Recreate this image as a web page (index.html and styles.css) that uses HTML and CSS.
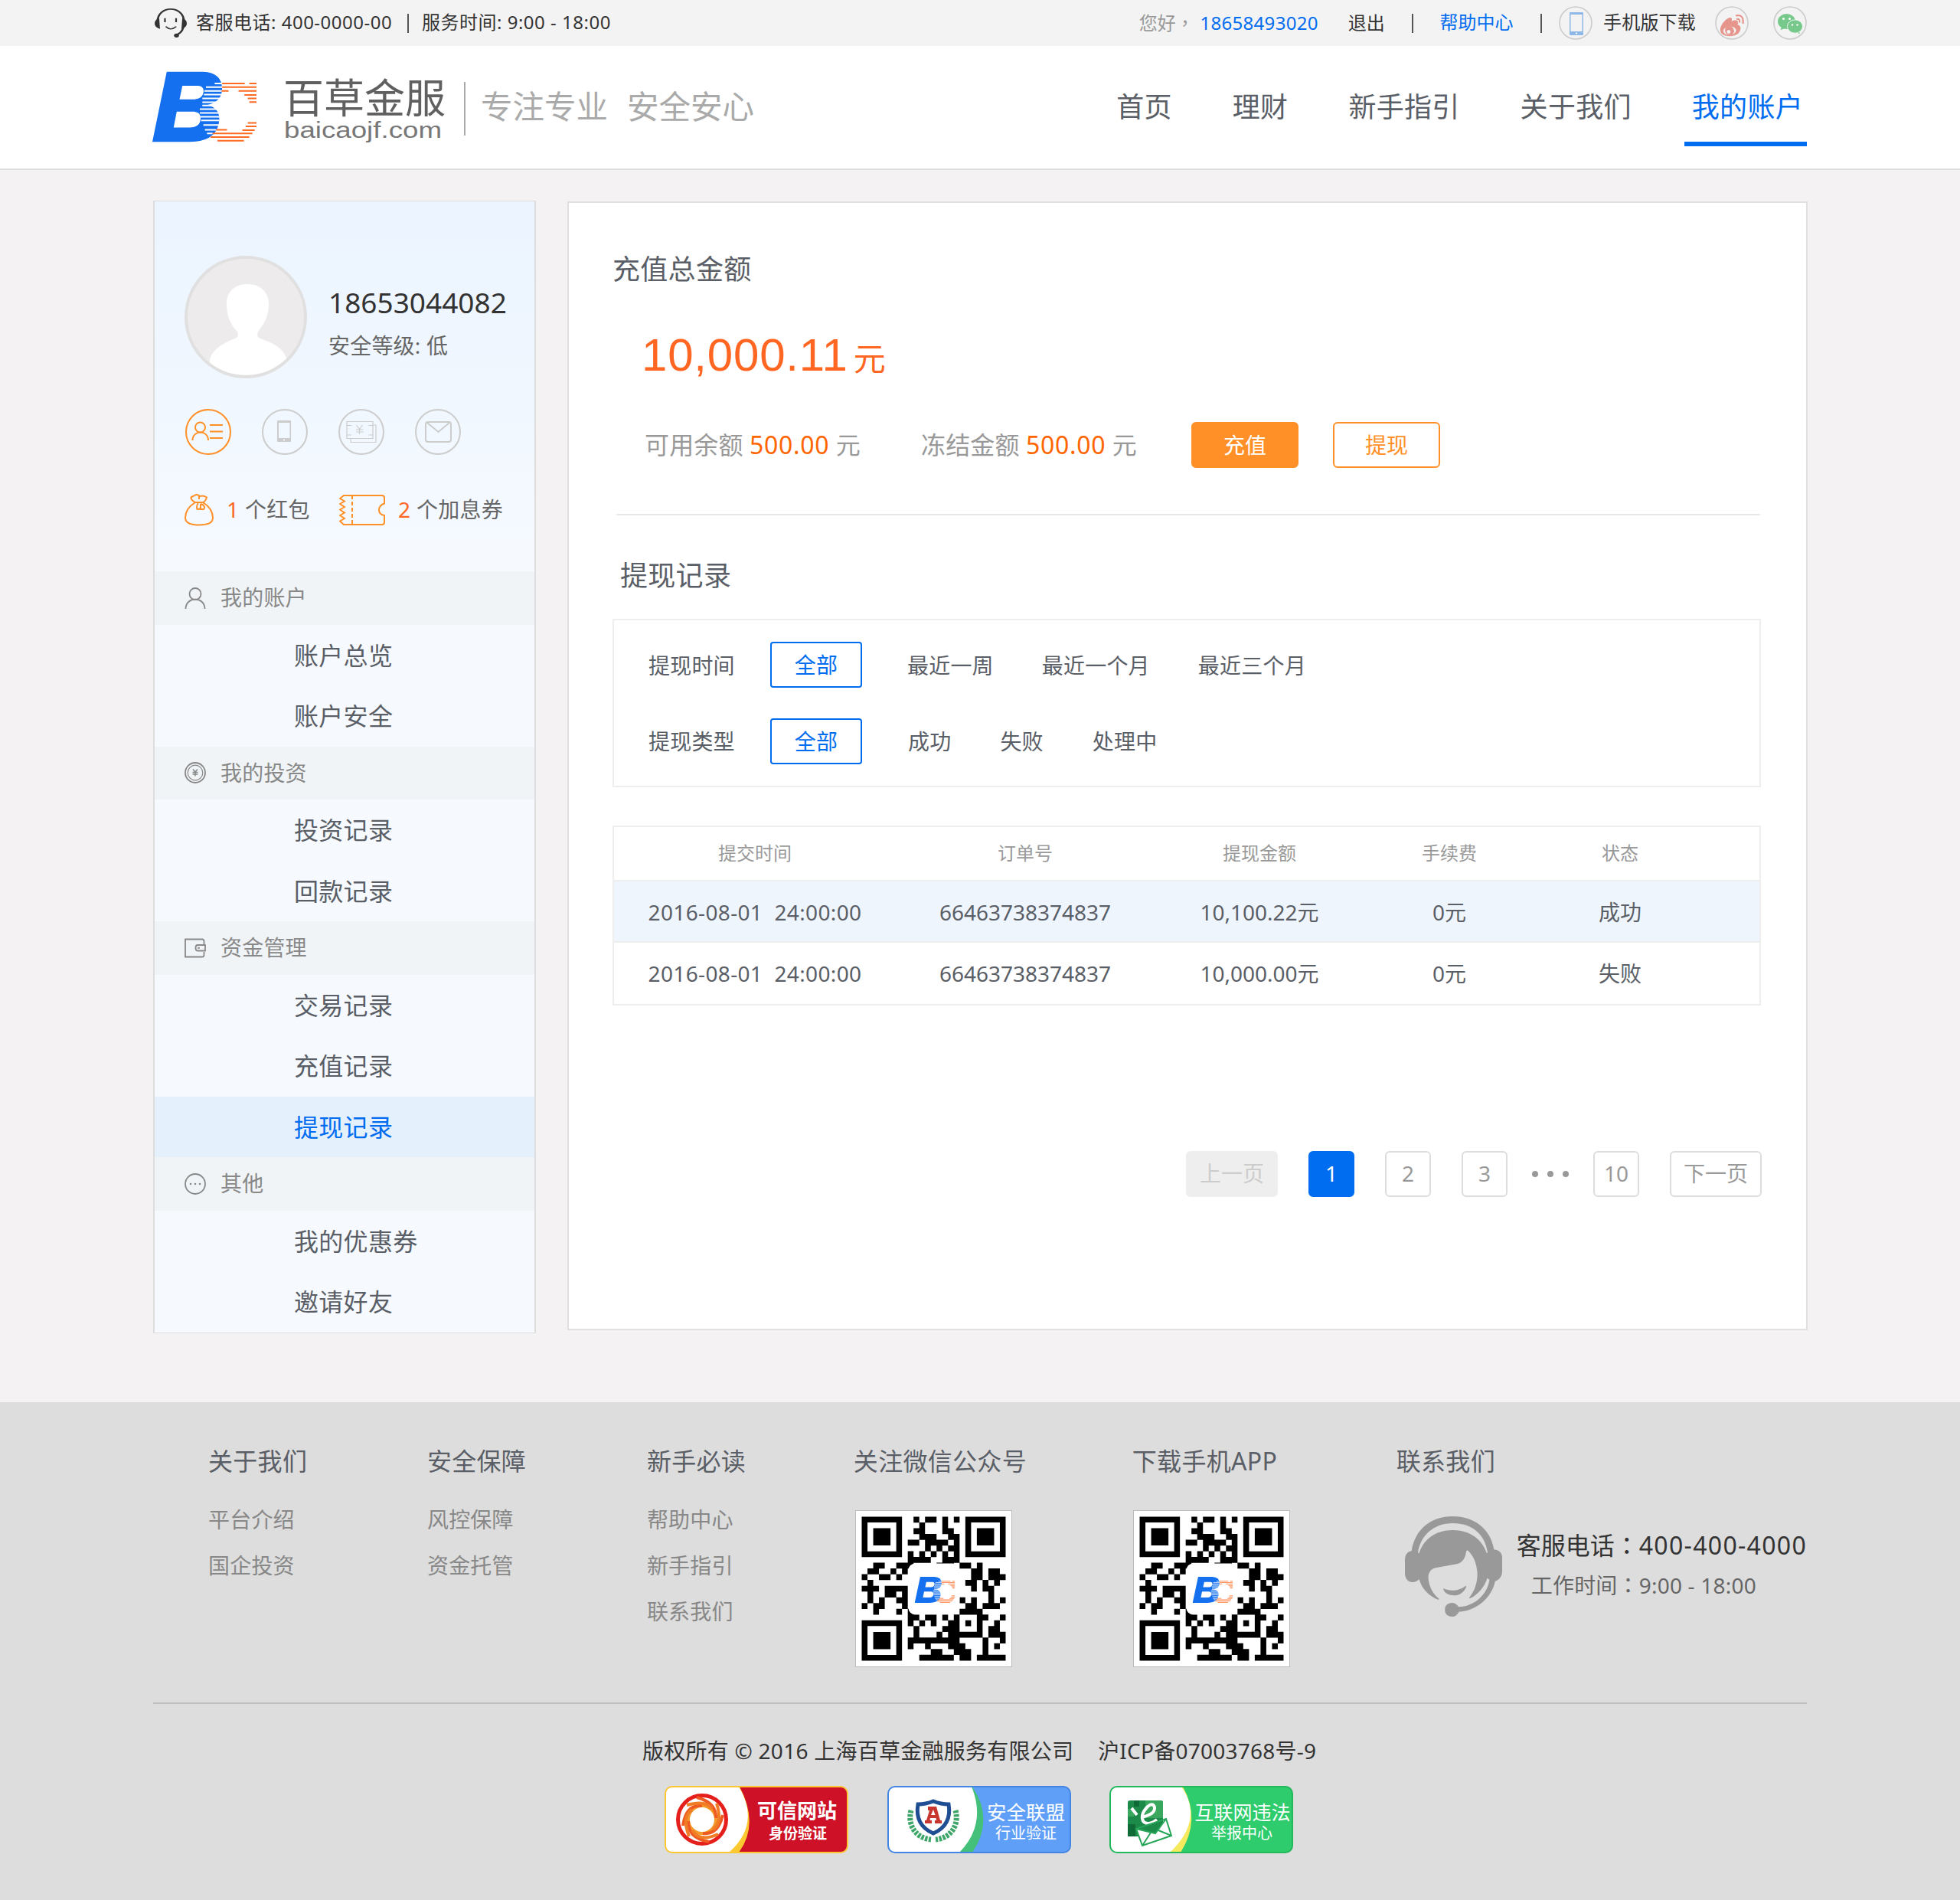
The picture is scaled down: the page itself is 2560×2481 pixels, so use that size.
FILE: index.html
```html
<!DOCTYPE html>
<html lang="zh-CN">
<head>
<meta charset="utf-8">
<title>百草金服 - 提现记录</title>
<link rel="stylesheet" href="styles.css">
</head>
<body>
<svg class="sprite" aria-hidden="true">
  <symbol id="bc-mark" viewBox="27 25 406 278" preserveAspectRatio="none">
    <path fill="#1470ee" fill-rule="evenodd" d="M83 27H225Q299 30 299 95Q297 145 240 157Q288 166 288 212Q284 300 172 301H27ZM144 82L133 135H190Q223 133 227 105Q228 83 205 82ZM122 183L110 245H175Q213 243 215 212Q217 184 190 183Z"/>
    <path stroke="#fff" stroke-width="6" d="M270 73H299M236 87H299M230 102H299M228 116H299M222 131H292M222 146H280M222 159H268M268 166H288M212 173H282M212 188H288M214 203H289M217 217H288M226 235H288M232 254H276M240 268H262"/>
    <path stroke="#ff6a22" stroke-width="6" d="M299 73H387M405 73H433M299 87H433M297 102H324M363 102H433M386 118H433M399 131H433M405 145H433M399 227H433M391 240H433M276 254H318M378 255H426M262 268H417M254 282H405M281 296H384"/>
  </symbol>
  <symbol id="qr" viewBox="-1 -1 27 27">
    <path fill="#fff" d="M-1-1H26V26H-1Z"/>
    <path fill="none" stroke="#000" d="M.5.5h6v6h-6zM18.5.5h6v6h-6zM.5 18.5h6v6h-6z"/>
    <path d="M2 2h3v3H2zM20 2h3v3h-3zM2 20h3v3H2z"/>
    <path stroke="#000" stroke-width="1.03" d="M9 .5h1M11 .5h2M14 .5h1M16 .5h1M10 1.5h1M14 1.5h1M9 2.5h2M14 2.5h2M10 3.5h3M15 3.5h2M8 4.5h2M11 4.5h4M16 4.5h1M11 5.5h1M13 5.5h1M15 5.5h2M8 6.5h1M10 6.5h1M12 6.5h1M14 6.5h1M16 6.5h1M8 7.5h4M14 7.5h3M2 8.5h2M6 8.5h3M13 8.5h3M17 8.5h2M20 8.5h1M1 9.5h2M5 9.5h1M7 9.5h1M19 9.5h2M22 9.5h2M0 10.5h1M3 10.5h2M6 10.5h1M19 10.5h2M22 10.5h3M1 11.5h1M18 11.5h2M21 11.5h1M23 11.5h1M0 12.5h3M4 12.5h4M19 12.5h1M21 12.5h2M1 13.5h1M4 13.5h2M7 13.5h1M22 13.5h1M1 14.5h1M3 14.5h1M6 14.5h2M17 14.5h1M19 14.5h1M22 14.5h1M24 14.5h1M0 15.5h1M2 15.5h2M7 15.5h1M18 15.5h2M21 15.5h3M2 16.5h1M6 16.5h1M8 16.5h1M17 16.5h4M8 17.5h2M11 17.5h2M14 17.5h1M16 17.5h1M20 17.5h2M24 17.5h1M8 18.5h1M10 18.5h1M12 18.5h1M15 18.5h2M18 18.5h1M20 18.5h1M23 18.5h1M9 19.5h1M14 19.5h3M20 19.5h1M22 19.5h2M9 20.5h1M13 20.5h1M15 20.5h6M22 20.5h3M8 21.5h9M21 21.5h1M24 21.5h1M8 22.5h1M11 22.5h1M15 22.5h3M21 22.5h1M23 22.5h1M12 23.5h2M16 23.5h3M21 23.5h1M10 24.5h6M17 24.5h2M20 24.5h5"/>
    <rect x="8.1" y="8.1" width="8.9" height="8.9" rx="1.2" fill="#fff"/>
    <use href="#bc-mark" x="9.2" y="10.4" width="7" height="4.6"/>
  </symbol>
</svg>

<div class="topbar">
  <div class="wrap topbar-in">
    <svg class="i-headset" viewBox="41 36 78 114" preserveAspectRatio="none"><g fill="none" stroke="#333"><path stroke-width="5" d="M48 88C48 22 112 22 112 88C112 118 104 134 95 139"/><path stroke-width="4" d="M66 74V90M93 74V90M68 107Q80 126 93 107"/></g><path fill="#333" d="M52 75Q41 80 41 95T54 116ZM108 75Q119 80 119 95T106 116Z"/><ellipse cx="94" cy="142" rx="6" ry="8" fill="#333"/></svg>
    <span class="t-tel">客服电话: 400-0000-00</span>
    <i class="bar"></i>
    <span class="t-hours">服务时间: 9:00 - 18:00</span>
    <span class="t-hello">您好<span class="punct" lang="zh-TW">，</span></span>
    <a class="t-phone">18658493020</a>
    <span class="t-exit">退出</span>
    <i class="bar"></i>
    <a class="t-help">帮助中心</a>
    <i class="bar"></i>
    <svg class="ring r1" viewBox="0 0 44 44"><circle cx="22" cy="22" r="21" fill="none" stroke="#ccc" stroke-width="1.6"/><path fill="#90b8e6" fill-rule="evenodd" d="M15 8H31Q32 8 32 9V37Q32 38 31 38H15Q14 38 14 37V9Q14 8 15 8ZM15.500 11V33H30.500V11Z"/><circle cx="23" cy="35.500" r="1.100" fill="#fff"/></svg>
    <span class="t-dl">手机版下载</span>
    <svg class="ring r2" viewBox="0 0 44 44"><circle cx="22" cy="22" r="21" fill="none" stroke="#ccc" stroke-width="1.600"/><path fill="#e5958b" fill-rule="evenodd" d="M7 32C6 25 15 15 20 15C23 15 22 19 21.500 20C27 17 32 19 29.500 24C35 26 34 31 31 35C26 41 8 41 7 32ZM11 33C12 40 28 39 27.500 31C26 24 10 26 11 33Z"/><path fill="#e5958b" fill-rule="evenodd" d="M13.500 33.500a5.800 5 0 1 0 11-2.800a5.800 5 0 1 0-11 2.800zM15.500 34a2.400 2.300 0 1 1 4.800-1a2.400 2.300 0 1 1-4.800 1z"/><path fill="none" stroke="#e5958b" stroke-width="2.200" d="M27 12.500Q38 10 36.500 23M28 17Q33 16 32 21.500"/></svg>
    <svg class="ring r3" viewBox="0 0 44 44"><circle cx="22" cy="22" r="21" fill="none" stroke="#ccc" stroke-width="1.600"/><g fill="#76c98b"><ellipse cx="17.500" cy="20" rx="11.500" ry="10"/><path d="M11 27L9.500 31L16 29ZM33 31L35 36L27 34Z"/><ellipse cx="28.500" cy="26.500" rx="10" ry="8.700" stroke="#f3f3f3" stroke-width="1"/></g><g fill="#fff"><circle cx="13.500" cy="16.500" r="1.500"/><circle cx="21.500" cy="16.500" r="1.500"/><circle cx="25" cy="24.500" r="1.200"/><circle cx="31.500" cy="24.500" r="1.200"/></g></svg>
  </div>
</div>

<header class="header">
  <div class="wrap header-in">
    <svg class="mark"><use href="#bc-mark"/></svg>
    <div class="brand">
      <div class="brand-cn">百草金服</div>
      <svg class="brand-en" viewBox="0 0 210 38"><text x="0" y="28" textLength="206" lengthAdjust="spacingAndGlyphs">baicaojf.com</text></svg>
    </div>
    <div class="slogan"><span>专注专业</span><span>安全安心</span></div>
    <nav class="nav"><a>首页</a><a>理财</a><a>新手指引</a><a>关于我们</a><a class="on">我的账户</a></nav>
  </div>
</header>

<main class="wrap main">
  <aside class="side">
    <div class="profile">
      <div class="who">
        <svg class="avatar" viewBox="0 0 160 160"><defs><clipPath id="av"><circle cx="80" cy="80" r="76"/></clipPath></defs><circle cx="80" cy="80" r="78" fill="#edebec"/><path clip-path="url(#av)" fill="#fff" d="M82 37C100 37 110 48 110 63C110 80 103 90 96 99C94 107 96 107 104 110C122 116 133 126 134 138V160H33V136C35 124 49 115 63 109C70 107 71 105 69 99C61 91 55 80 55 63C55 47 65 37 82 37Z"/><circle cx="80" cy="80" r="78" fill="none" stroke="#e0e0e0" stroke-width="4"/></svg>
        <div class="who-text"><div class="who-no">18653044082</div><div class="who-lv">安全等级: 低</div></div>
      </div>
      <div class="verify">
        <svg viewBox="0 0 60 60" stroke="#ff9027"><circle cx="30" cy="30" r="29"/><circle cx="19.500" cy="24" r="6.500"/><path d="M9.500 41C9.500 27 30 27 30 41M32 21H49M32 29.500H49M32 38H49"/></svg>
        <svg viewBox="0 0 60 60" stroke="#ccc"><circle cx="30" cy="30" r="29"/><path fill="#ccc" stroke="none" fill-rule="evenodd" d="M21 15H37Q38 15 38 16V42Q38 43 37 43H21Q20 43 20 42V16Q20 15 21 15ZM22 18V38H36.500V18Z"/><circle cx="29" cy="40.500" r="1" fill="#fff" stroke="none"/></svg>
        <svg viewBox="0 0 60 60" stroke="#ccc"><circle cx="30" cy="30" r="29"/><path stroke-width="1.200" d="M11 16.500H45V38.500H11ZM16 39V43.500H49V21H45M11 21.500H17M11 34H17M39 21.500H45M39 34H45M23.500 21L27.500 26.500L31.500 21M27.500 26.500V33M23 27H32.500M23 30H32.500"/></svg>
        <svg viewBox="0 0 60 60" stroke="#ccc"><circle cx="30" cy="30" r="29"/><rect x="14" y="17" width="33" height="26" rx="3"/><path d="M16 18L30.500 30L45 18"/></svg>
      </div>
      <div class="perks">
        <svg class="i-bag" viewBox="0 0 38 42"><path d="M14 11C6 16 1 23 1 31C1 38 7 40.500 19 40.500S37 38 37 31C37 23 32 16 24 11M14 11C10 9 8 6 8.500 4.500C10 3 12 3 13 2C16 0 18 1 20 3C23 2 27 3 29 4.500C28 8 27 10 24 11ZM19 2V7M18 12C15 14 16 20 17 20L21 19V13M21 13C26 14 27 18 25 20L20 20"/></svg>
        <span class="p1"><b>1</b> 个红包</span>
        <svg class="i-ticket" viewBox="0 0 60 40"><path d="M6 1H56Q59 1 59 4V11.500Q52 14 52 20T59 27V36Q59 39 56 39H6L1 34.500L7 31L1 27L7 23.500L1 19.500L7 16L1 12L7 8.500L1 5Z"/><path stroke-dasharray="5 3" d="M17 1V39"/></svg>
        <span class="p2"><b>2</b> 个加息券</span>
      </div>
    </div>
    <div class="menu">
      <div class="m-head"><svg viewBox="0 0 28 28"><circle cx="14" cy="8.500" r="7.500"/><path d="M1.500 28C1.500 11.500 26.500 11.500 26.500 28"/></svg><span>我的账户</span></div>
      <a>账户总览</a><a>账户安全</a>
      <div class="m-head"><svg viewBox="0 0 28 28"><circle cx="14" cy="14" r="13"/><circle cx="14" cy="14" r="9.800" stroke-width="1.200"/><path stroke-width="1.500" d="M11 9.500L14 13L17 9.500M14 13V18.500M10.500 13.500H17.500M10.500 16H17.500"/></svg><span>我的投资</span></div>
      <a>投资记录</a><a>回款记录</a>
      <div class="m-head"><svg viewBox="0 0 28 28"><path d="M25.500 9V5Q25.500 2.500 23 2.500H1V25.500H23Q25.500 25.500 25.500 23V19M17 10H27V17.500H17Q14.500 17.500 14.500 13.800T17 10Z"/><circle cx="18.500" cy="13.800" r=".5"/></svg><span>资金管理</span></div>
      <a>交易记录</a><a>充值记录</a><a class="on">提现记录</a>
      <div class="m-head"><svg viewBox="0 0 28 28"><circle cx="14" cy="14" r="13"/><path stroke-width="2.600" stroke-linecap="round" d="M8 14h.01M14 14h.01M20 14h.01"/></svg><span>其他</span></div>
      <a>我的优惠券</a><a>邀请好友</a>
    </div>
  </aside>

  <section class="panel">
    <h2 class="h-total">充值总金额</h2>
    <div class="total"><span class="total-n">10,000.11</span><span class="total-u">元</span></div>
    <div class="balance">
      <span>可用余额 <b>500.00</b> 元</span>
      <span class="frozen">冻结金额 <b>500.00</b> 元</span>
      <button class="btn solid">充值</button>
      <button class="btn line">提现</button>
    </div>
    <h2 class="h-rec">提现记录</h2>
    <div class="filters">
      <div class="f-row time"><span>提现时间</span><em>全部</em><a>最近一周</a><a>最近一个月</a><a>最近三个月</a></div>
      <div class="f-row type"><span>提现类型</span><em>全部</em><a>成功</a><a>失败</a><a>处理中</a></div>
    </div>
    <div class="table">
      <div class="tr th"><span>提交时间</span><span>订单号</span><span>提现金额</span><span>手续费</span><span>状态</span></div>
      <div class="tr hl"><span class="date">2016-08-01&nbsp; 24:00:00</span><span>66463738374837</span><span>10,100.22元</span><span>0元</span><span>成功</span></div>
      <div class="tr"><span class="date">2016-08-01&nbsp; 24:00:00</span><span>66463738374837</span><span>10,000.00元</span><span>0元</span><span>失败</span></div>
    </div>
    <div class="pager">
      <a class="wide off">上一页</a><a class="cur">1</a><a>2</a><a>3</a><span class="dots"><i></i><i></i><i></i></span><a>10</a><a class="wide">下一页</a>
    </div>
  </section>
</main>

<footer class="footer">
  <div class="wrap">
    <div class="cols">
      <div class="col c1"><h3>关于我们</h3><a>平台介绍</a><a>国企投资</a></div>
      <div class="col c2"><h3>安全保障</h3><a>风控保障</a><a>资金托管</a></div>
      <div class="col c3"><h3>新手必读</h3><a>帮助中心</a><a>新手指引</a><a>联系我们</a></div>
      <div class="col c4"><h3>关注微信公众号</h3><svg class="qr"><use href="#qr"/></svg></div>
      <div class="col c5"><h3>下载手机APP</h3><svg class="qr"><use href="#qr"/></svg></div>
      <div class="col c6"><h3>联系我们</h3>
        <div class="contact">
          <svg class="i-agent" viewBox="139 330 321 393" preserveAspectRatio="none"><g fill="#999"><path d="M161 466C172 380 225 330 297 330S422 380 433 460C452 462 460 475 460 492V545C460 565 450 580 437 584C425 650 375 700 317 704C312 716 304 723 294 723C280 723 271 712 271 696S280 669 294 669C304 669 311 675 316 685C370 682 412 635 418 578L411 572C402 605 380 638 353 652L351 649C375 615 381 570 377 540C373 505 362 480 347 464C343 462 341 466 341 470C338 495 328 512 310 517L240 532C225 536 217 550 216 568C217 600 230 635 252 653L250 657C220 645 195 615 186 577C180 584 173 588 164 588C148 588 139 572 139 552V500C139 482 148 467 161 466ZM182 472L186 475C200 420 240 384 297 384S393 420 409 474L412 472C404 400 360 357 297 357S190 405 182 472Z" fill-rule="evenodd"/><path d="M266 612C285 624 318 624 339 602Q342 602 341 608C332 630 318 640 301 640S270 632 266 616Z"/></g></svg>
          <div><div class="ct-tel">客服电话<i class="punct" lang="zh-TW">：</i><span>400-400-4000</span></div><div class="ct-hr">工作时间<i class="punct" lang="zh-TW">：</i>9:00 - 18:00</div></div>
        </div>
      </div>
    </div>
    <div class="copy"><span>版权所有 © 2016 上海百草金融服务有限公司</span><span>沪ICP备07003768号-9</span></div>
    <div class="badges">
      <svg viewBox="0 0 240 88"><rect x="1" y="1" width="238" height="86" rx="9" fill="#fff"/><path fill="#fbc832" d="M97 1Q126 50 84 87H232V1Z"/><path fill="#ce1126" d="M98 1Q124 50 97 87H230Q239 87 239 78V10Q239 1 230 1Z"/><rect x="1" y="1" width="238" height="86" rx="9" fill="none" stroke="#fbc832" stroke-width="2"/><g fill="none" stroke-width="4"><circle cx="49" cy="44" r="31.500" stroke="#e5201c" stroke-width="5"/><circle cx="49" cy="44" r="18" stroke="#f49a2a"/><path stroke="#ee5a22" d="M49 26Q28 24 24 52M67 42Q68 22 42 15M50 62Q70 64 76 38M31 46Q30 68 58 73"/><path stroke="#f07c26" d="M36 31Q22 40 32 66M62 30Q54 18 29 25M63 57Q76 48 68 23M36 58Q46 74 70 63"/></g><text class="bt b" x="173" y="42" font-size="26">可信网站</text><text class="bt b" x="174" y="69" font-size="19">身份验证</text></svg>
      <svg viewBox="0 0 240 88"><rect x="1" y="1" width="238" height="86" rx="9" fill="#fff"/><path fill="#45c07a" d="M110 1Q130 50 94 87H200V1Z"/><path fill="#5f9ff8" d="M111 1Q140 44 111 87H230Q239 87 239 78V10Q239 1 230 1Z"/><rect x="1" y="1" width="238" height="86" rx="9" fill="none" stroke="#4285e2" stroke-width="2"/><path fill="#fff" stroke="#1f4e92" stroke-width="5" d="M60 20Q70 24 80 24C83 42 76 55 60 62C44 55 37 42 40 24Q50 24 60 20Z"/><path fill="#c8372d" fill-rule="evenodd" d="M55 27H64L69 45H71V49H62V45H64L63.500 42H56L55.500 45H58V49H49V45H51L55 32H53V27ZM57 38H62.500L60 31Z"/><g fill="none" stroke="#3fa66a"><path stroke-width="7" stroke-dasharray="3.500 1.500" d="M31 32C26 50 36 68 57 70M89 32C94 50 84 68 63 70"/></g><text class="bt" x="181" y="44" font-size="25.500">安全联盟</text><text class="bt" x="181" y="69" font-size="20">行业验证</text></svg>
      <svg viewBox="0 0 240 88"><rect x="1" y="1" width="238" height="86" rx="9" fill="#fff"/><path fill="#f5ea5e" d="M94 1Q124 44 79 87H200V1Z"/><path fill="#2ecc6c" d="M96 1Q120 44 93 87H230Q239 87 239 78V10Q239 1 230 1Z"/><rect x="1" y="1" width="238" height="86" rx="9" fill="none" stroke="#22b85c" stroke-width="2"/><rect x="24" y="19" width="46" height="47" rx="3" fill="#1c8a48"/><path fill="#39a75e" d="M47 19H67Q70 19 70 22V42H47ZM24 30h8v10h-8z"/><path fill="#0e6a36" d="M24 50h10v16H24zM32 19h7v8h-7z"/><path fill="none" stroke="#fff" stroke-width="4" d="M42 41Q60 37 59 28Q57 21 50 27Q40 37 44 46Q50 53 62 44M29 29L36 38"/><path fill="#fff" stroke="#27a558" stroke-width="2" d="M35 56L74 43L81 65L43 78ZM35 56L60 62L74 43M43 78L54 61M81 65L64 58"/><text class="bt" x="174" y="44" font-size="25">互联网违法</text><text class="bt" x="173" y="69" font-size="20">举报中心</text></svg>
    </div>
  </div>
</footer>
</body>
</html>
```
FILE: styles.css
```css
* { box-sizing: border-box; margin: 0; padding: 0; }
body {
  width: 2560px;
  background: #f4f2f3;
  color: #5a5e66;
  font-family: "Noto Sans", "Noto Sans CJK SC", sans-serif;
  font-size: 28px;
  font-weight: 400;
}
i, em { font-style: normal; }
b { font-weight: 400; }
svg { display: block; flex: none; }
span, a { white-space: nowrap; }
.sprite { position: absolute; width: 0; height: 0; }
.wrap { width: 2160px; margin: 0 auto; }
/* full-width punctuation set in the middle of its cell */
.punct { font-family: "Noto Sans CJK TC", sans-serif; line-height: 1; }

/* top bar */
.topbar { height: 60px; background: #f3f3f3; font-size: 24px; line-height: 58px; color: #333; }
.topbar-in { display: flex; align-items: center; height: 60px; }
.topbar-in > span, .topbar-in > a { height: 60px; }
.i-headset { width: 42px; height: 38px; margin-left: 2px; }
.t-tel { width: 277px; margin-left: 12px; letter-spacing: .5px; }
.bar { width: 2px; height: 25px; background: #555; }
.t-hours { width: 940px; margin-left: 17px; letter-spacing: .5px; }
.t-hello { width: 80px; color: #999; }
.t-phone { width: 194px; color: #006cef; letter-spacing: .3px; }
.t-exit { width: 84px; }
.t-help { width: 132px; margin-left: 34px; color: #006cef; }
.t-hello, .t-phone, .t-exit { padding-top: 1px; }
.ring { width: 44px; height: 44px; }
.r1 { margin-left: 22px; }
.t-dl { width: 121px; margin-left: 14px; letter-spacing: .2px; }
.r2 { margin-left: 25px; }
.r3 { margin-left: 32px; }

/* header */
.header { height: 162px; background: #fff; border-bottom: 2px solid #dedede; }
.header-in { display: flex; height: 160px; }
.mark { width: 136px; height: 93px; margin: 33px 0 0 -1px; }
.brand { width: 235px; margin: 42px 0 0 36px; }
.brand-cn { height: 52px; margin-left: -1px; font-size: 53px; line-height: 52px; color: #606060; }
.brand-en { width: 210px; height: 38px; margin-top: -2px; overflow: visible; }
.brand-en text { font: 29px "Liberation Sans", sans-serif; fill: #777; }
.slogan { display: flex; gap: 25px; height: 70px; margin-top: 47px; padding-left: 20px; border-left: 2px solid #aaa; font-size: 41.5px; line-height: 65px; color: #aaa; }
.nav { display: flex; gap: 79px; margin-left: auto; padding-right: 5px; font-size: 36px; line-height: 160px; letter-spacing: .3px; }
.nav .on { height: 131px; margin: 0 -5px 0 -10px; padding: 0 5px 0 10px; color: #006cef; border-bottom: 6px solid #006cef; }

/* layout */
.main { display: flex; align-items: flex-start; padding-top: 40px; height: 1609px; }
.side { width: 500px; height: 1479px; border: 2px solid #ddd; border-top-width: 1px; }
.profile { height: 483px; padding: 71px 0 0 39px; background: linear-gradient(#ebf4ff, #f6faff); }
.who { display: flex; }
.avatar { width: 160px; height: 160px; }
.who-text { margin: 36px 0 0 28px; }
.who-no { font-size: 37px; line-height: 49px; color: #333; }
.who-lv { margin-top: 10px; line-height: 45px; letter-spacing: .2px; color: #666; }
.verify { display: flex; gap: 40px; margin: 40px 0 0 1px; fill: none; stroke-width: 2; }
.verify svg { width: 60px; height: 60px; }
.perks { display: flex; align-items: center; height: 44px; margin-top: 50px; line-height: 43px; letter-spacing: .3px; color: #666; }
.perks span { height: 44px; }
.perks svg { fill: none; stroke: #ff9027; stroke-width: 2; }
.perks b { color: #ff6622; }
.i-bag { width: 38px; height: 42px; }
.i-ticket { width: 60px; height: 40px; }
.p1 { width: 147px; margin-left: 17px; }
.p2 { margin-left: 17px; }
.menu { background: #f6faff; }
.m-head { display: flex; align-items: center; gap: 19px; height: 69.5px; padding-left: 39px; background: #f0f4f7; letter-spacing: .2px; color: #888; }
.m-head span { height: 69.5px; line-height: 68px; }
.m-head svg { width: 28px; height: 28px; fill: none; stroke: #888; stroke-width: 1.8; }
.menu a { display: block; height: 79.5px; padding-left: 182px; font-size: 32px; line-height: 79px; letter-spacing: .3px; }
.menu .on { background: #e5f0fd; color: #006cef; }

.panel { width: 1620px; height: 1474px; margin: 1px -1px 0 41px; padding: 56px 0 0 57px; background: #fff; border: 2px solid #e0e0e0; }
h2 { font-size: 36px; line-height: 62px; font-weight: 400; letter-spacing: .3px; }
.h-total { height: 60px; }
.total { height: 80px; margin-top: 44px; padding-left: 38px; line-height: 78px; color: #ff6622; }
.total-n { font: 60px/78px "Liberation Sans", sans-serif; letter-spacing: .8px; }
.total-u { margin-left: 7px; font-size: 42px; }
.balance { display: flex; align-items: center; width: 1494px; height: 168px; margin-left: 5px; padding: 0 0 14px 37px; border-bottom: 2px solid #e8e8e8; font-size: 32px; color: #999; }
.balance span { width: 361px; padding-bottom: 4px; letter-spacing: .15px; }
.balance b { color: #ff6600; letter-spacing: .7px; }
.balance .frozen { width: 353px; }
.btn { width: 140px; height: 60px; border: 2px solid #ff9027; border-radius: 6px; font: inherit; font-size: 28px; line-height: 56px; }
.solid { background: #ff9027; color: #fff; }
.line { margin-left: 45px; background: #fff; color: #ff9027; }
.h-rec { height: 60px; margin-top: 48px; padding-left: 10px; }
.filters { width: 1500px; height: 220px; margin-top: 27px; padding: 28px 0 0 45px; border: 2px solid #eee; letter-spacing: .2px; }
.f-row { display: flex; height: 100px; line-height: 61px; }
.f-row.time { line-height: 63px; }
.f-row span { width: 158px; }
.f-row em { width: 120px; height: 60px; margin: 0 59px 0 1px; border: 2px solid #006cef; border-radius: 4px; line-height: 57px; text-align: center; color: #006cef; }
.f-row a { margin-right: 63px; }
.type em { margin-right: 60px; }
.type a { margin-right: 64px; }
.table { width: 1500px; margin-top: 50px; border: 2px solid #eee; }
.tr { display: grid; grid-template-columns: 368px 338px 274px 222px 224px; height: 80px; border-bottom: 2px solid #eee; line-height: 80px; text-align: center; }
.tr:last-child { border-bottom: 0; }
.th { height: 71px; line-height: 67px; font-size: 24px; color: #999; }
.hl { background: #eff5fd; }
.date { letter-spacing: .35px; }
.pager { display: flex; gap: 40px; width: 1501px; margin-top: 190px; justify-content: flex-end; }
.pager a { width: 60px; height: 60px; border: 2px solid #ddd; border-radius: 6px; line-height: 55px; text-align: center; color: #999; }
.pager .wide { width: 120px; }
.pager .off { background: #eee; border-color: #eee; color: #ccc; }
.pager .cur { background: #006cef; border-color: #006cef; color: #fff; }
.dots { display: flex; align-items: center; gap: 12px; width: 48px; margin: 0 -8px; }
.dots i { width: 8px; height: 8px; border-radius: 50%; background: #999; }

/* footer */
.footer { height: 650px; background: #ddd; color: #888; }
.cols { display: flex; height: 394px; padding: 48px 0 0 72px; border-bottom: 2px solid #c0c0c0; }
.col a { display: block; height: 60px; line-height: 58px; letter-spacing: .2px; }
h3 { height: 60px; margin-bottom: 16px; font-size: 32px; line-height: 58px; font-weight: 400; letter-spacing: .3px; color: #5a5e66; white-space: nowrap; }
.c1 { width: 286px; }
.c2 { width: 287px; }
.c3 { width: 270px; }
.c4 { width: 364px; }
.c5 { width: 345px; }
.qr { width: 205px; height: 205px; margin: 33px 0 0 1px; border: 1px solid #bbb; }
.c4 .qr { margin-left: 2px; }
.contact { display: flex; margin: 41px 0 0 11px; }
.i-agent { width: 127px; height: 131px; }
.contact > div { margin-left: 19px; }
.ct-tel { height: 48px; margin-top: 14px; font-size: 32px; line-height: 47px; color: #333; white-space: nowrap; }
.ct-tel span { letter-spacing: 1.3px; }
.ct-hr { height: 44px; margin: 6px 0 0 19px; line-height: 44px; color: #666; letter-spacing: .2px; white-space: nowrap; }
.copy { display: flex; height: 54px; margin: 35px 0 0 639px; line-height: 52px; letter-spacing: .25px; color: #333; }
.copy span:first-child { width: 595px; }
.badges { display: flex; gap: 50.5px; margin: 18px 0 0 668px; }
.badges svg { width: 240px; height: 88px; }
.bt { fill: #fff; text-anchor: middle; }
.b { font-weight: 700; }
```
